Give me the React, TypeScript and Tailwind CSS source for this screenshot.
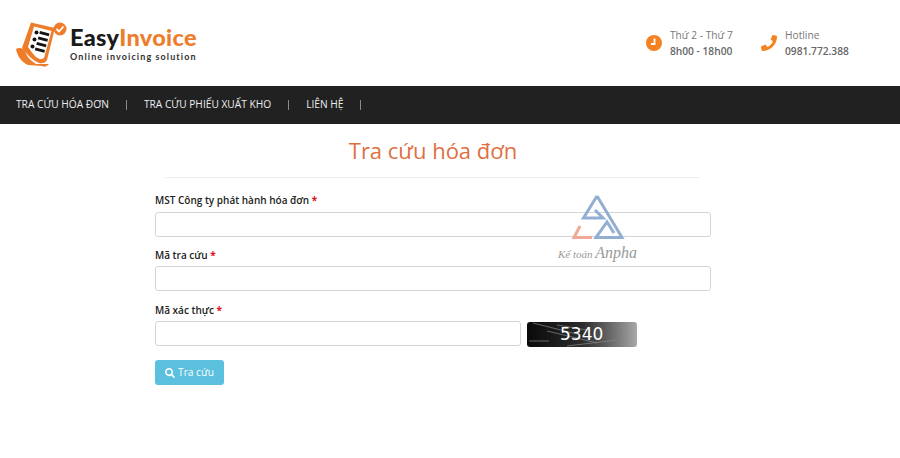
import { FaPhone, FaSearch } from "react-icons/fa";

const orange = "#f58220";

function Logo() {
  return (
    <svg width="52" height="52" viewBox="0 0 52 52" className="shrink-0">
      <path d="M0 29 C3 27 7 28 9 31 C11 37 14 40 20 44 L33 44 C30 47 29 47 26 46 L12 45 C5 42 1 35 0 29 Z" fill="#ee7d2b" />
      <path d="M6 28 L15 2.500 L39 8 L31 40 C29 44 24 44 21 42 C14 38 11 34 6 28 Z" fill="#ee7d2b" />
      <path d="M12 27 L18 6.500 L35.500 11 L28 38 C25 40 23 39 20 37 C17 34 15 31 12 27 Z" fill="#fff" />
      <g fill="#141414">
        <circle cx="20.500" cy="12.500" r="2" />
        <circle cx="18.500" cy="19.500" r="2" />
        <circle cx="16.500" cy="26.500" r="2" />
        <path d="M24 11 L33.500 13.500 L32.800 16.300 L23.300 13.800 Z" />
        <path d="M22.500 16.500 L32 19 L31.300 21.800 L21.800 19.300 Z" />
        <path d="M21 22 L30.500 24.500 L29.800 27.300 L20.300 24.800 Z" />
        <path d="M19.500 27.500 L29 30 L28.300 32.800 L18.800 30.300 Z" />
      </g>
      <circle cx="44" cy="9" r="6.500" fill="#ee7d2b" />
      <path d="M40.500 9 L43 11.500 L47.500 6.500" stroke="#fff" strokeWidth="1.800" fill="none" />
    </svg>
  );
}

function Watermark() {
  return (
    <div className="absolute left-[556px] top-[192px] w-[84px] h-[74px] pointer-events-none">
      <svg width="84" height="50" viewBox="0 0 84 50" className="absolute left-0 top-0">
        <path d="M41 4 L66 45.500 L40 45.500 L51 30 L58 41" fill="none" stroke="#92aed2" strokeWidth="3" />
        <path d="M41 4 L27.500 26 L47 26 L39 18" fill="none" stroke="#92aed2" strokeWidth="3" />
        <path d="M24 34 L18 45.500 L36 45.500" fill="none" stroke="#f0a898" strokeWidth="3" />
      </svg>
      <div className="absolute left-[2px] top-[53px] whitespace-nowrap text-[11px] leading-[16px] italic text-[#999] [font-family:'Liberation_Serif',serif]">
        Kế toán <span className="text-[16px]">Anpha</span>
      </div>
    </div>
  );
}

function Field({ label, full = true, first = false }: { label: string; full?: boolean; first?: boolean }) {
  return (
    <div className="flex flex-col">
      <label className="text-[10px] leading-[17px] font-semibold text-[#222]">
        {label} <span className="text-[#e0101a] font-bold">*</span>
      </label>
      <input className={`${first ? "mt-[3px]" : "mt-[2px]"} h-[25px] bg-white border border-[#d5d5d5] rounded-[3px] ${full ? "w-[556px]" : "w-[366px]"}`} />
    </div>
  );
}

function Captcha() {
  return (
    <div className="relative w-[110px] h-[25px] ml-[6px] mt-[1px] rounded-[3px] overflow-hidden bg-gradient-to-r from-[#0a0a0a] via-[#2c2c2c] to-[#a8a8a8]">
      <svg width="110" height="25" className="absolute left-0 top-0">
        <g stroke="#8a8a8a" strokeWidth="0.700" fill="none">
          <path d="M6 1 L50 12" />
          <path d="M20 9 L70 21" />
          <path d="M2 19 L22 19" />
          <path d="M30 3 L60 8" />
          <path d="M40 24 L90 18" />
        </g>
      </svg>
      <span className="absolute left-[33px] top-0 text-[17px] leading-[25px] text-white [font-family:'DejaVu_Sans',sans-serif]">5340</span>
    </div>
  );
}

function Separator() {
  return <span className="w-px h-[10px] bg-[#8a8a8a] mx-[17px]" />;
}

export default function App() {
  return (
    <div className="relative w-[900px] h-[458px] bg-white overflow-hidden [font-family:'Open_Sans',sans-serif]">
      <header className="h-[86px] flex items-start justify-between">
        <div className="flex items-start pl-[16px] pt-[20px]">
          <Logo />
          <div className="ml-[2px] pt-[3px]">
            <div className="text-[23.500px] leading-[28px] font-black [font-family:'Lato',sans-serif] tracking-[0.3px]">
              <span className="text-[#1a1a1a]">Easy</span>
              <span className="text-[#ee7d2b]">Invoice</span>
            </div>
            <div className="text-[9px] leading-[12px] font-bold tracking-[1.100px] text-[#333] [font-family:'Lato',sans-serif]">
              Online invoicing solution
            </div>
          </div>
        </div>
        <div className="flex items-start pt-[27px] w-[254px]">
          <div className="flex items-center w-[115px]">
            <svg width="16" height="16" viewBox="0 0 16 16" className="shrink-0">
              <circle cx="8" cy="8" r="8" fill={orange} />
              <path d="M8.500 3.500 V9 H5" stroke="#fff" strokeWidth="1.800" fill="none" />
            </svg>
            <div className="ml-[8px] text-[10.200px] leading-[16px]">
              <div className="text-[#777]">Thứ 2 - Thứ 7</div>
              <div className="font-semibold text-[#666]">8h00 - 18h00</div>
            </div>
          </div>
          <div className="flex items-center">
            <FaPhone size={16} color={orange} className="shrink-0" />
            <div className="ml-[8px] text-[10.200px] leading-[16px]">
              <div className="text-[#777]">Hotline</div>
              <div className="font-semibold text-[#666]">0981.772.388</div>
            </div>
          </div>
        </div>
      </header>

      <nav className="h-[38px] bg-[#212121] flex items-center pl-[16px] text-[10.200px] text-[#eee]">
        <span>TRA CỨU HÓA ĐƠN</span>
        <Separator />
        <span>TRA CỨU PHIẾU XUẤT KHO</span>
        <Separator />
        <span>LIÊN HỆ</span>
        <Separator />
      </nav>

      <main className="w-[556px] ml-[155px]">
        <h1 className="text-[22px] leading-[30px] mt-[11px] text-center text-[#dd7042]">Tra cứu hóa đơn</h1>
        <hr className="mt-[12px] ml-[10px] mr-[11px] border-[#eeeeee]" />
        <div className="mt-[14px] flex flex-col gap-[10px]">
          <Field label="MST Công ty phát hành hóa đơn" first />
          <Field label="Mã tra cứu" />
          <div className="flex items-start mt-[1px]">
            <Field label="Mã xác thực" full={false} />
            <div className="pt-[19px]"><Captcha /></div>
          </div>
        </div>
        <button className="mt-[13px] w-[69px] h-[25px] bg-[#5bc0de] rounded-[3px] text-white text-[10.200px] flex items-center justify-center gap-[3px]">
          <FaSearch size={10} color="#fff" />
          Tra cứu
        </button>
      </main>
      <Watermark />
    </div>
  );
}
